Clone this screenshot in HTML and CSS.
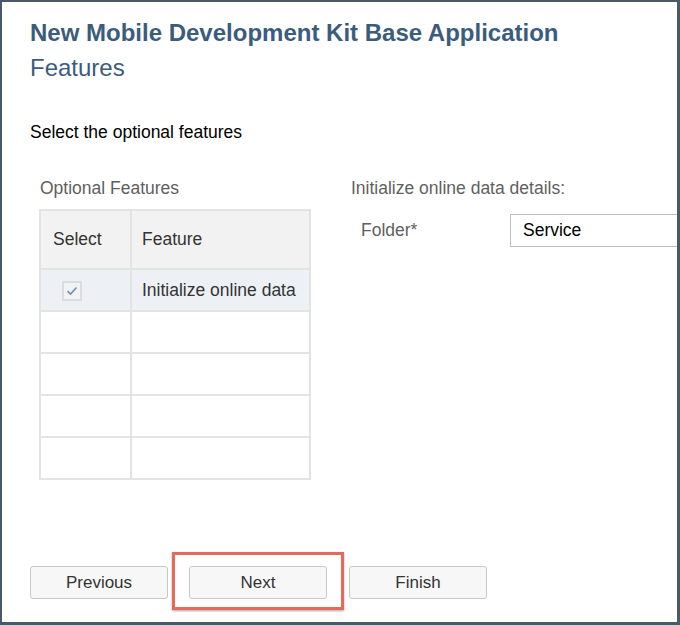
FILE: index.html
```html
<!DOCTYPE html>
<html>
<head>
<meta charset="utf-8">
<link rel="stylesheet" href="styles.css">
</head>
<body>
<div class="frame">
  <header class="head">
    <h1 class="title">New Mobile Development Kit Base Application</h1>
    <h2 class="subtitle">Features</h2>
  </header>
  <p class="intro">Select the optional features</p>
  <div class="content">
    <section class="left">
      <div class="label">Optional Features</div>
      <table class="grid">
        <thead>
          <tr><th class="c-sel">Select</th><th class="c-feat">Feature</th></tr>
        </thead>
        <tbody>
          <tr class="selected">
            <td class="c-sel"><span class="check"><svg width="12" height="10" viewBox="0 0 12 10"><path d="M1.5 5.2 L4.5 8 L10.5 1.5" fill="none" stroke="#6f8fb3" stroke-width="1.6"/></svg></span></td>
            <td>Initialize online data</td>
          </tr>
          <tr><td></td><td></td></tr>
          <tr><td></td><td></td></tr>
          <tr><td></td><td></td></tr>
          <tr><td></td><td></td></tr>
        </tbody>
      </table>
    </section>
    <section class="right">
      <div class="label">Initialize online data details:</div>
      <div class="field">
        <span class="field-label">Folder*</span>
        <div class="input">Service</div>
      </div>
    </section>
  </div>
  <div class="buttons">
    <button class="btn">Previous</button>
    <div class="highlight"><button class="btn">Next</button></div>
    <button class="btn">Finish</button>
  </div>
</div>
</body>
</html>
```
FILE: styles.css
```css
* { box-sizing: border-box; }
html, body { margin: 0; padding: 0; }
body {
  font-family: "Liberation Sans", Arial, sans-serif;
  background: #fff;
}
.frame {
  width: 680px;
  height: 625px;
  border-style: solid;
  border-color: #4a5a68;
  border-width: 2px 3px 3px 2px;
  padding: 0 0 12px 28px;
  overflow: hidden;
  display: flex;
  flex-direction: column;
}
.head { padding-top: 17px; }
.title {
  margin: 0;
  font-size: 24px;
  font-weight: bold;
  color: #3b5c7c;
  line-height: 28px;
  letter-spacing: 0;
}
.subtitle {
  margin: 7px 0 0;
  font-size: 24px;
  font-weight: normal;
  color: #3b5c7c;
  line-height: 28px;
}
.intro {
  margin: 40px 0 0;
  font-size: 17.5px;
  line-height: 21px;
  color: #000;
}
.content {
  display: flex;
  margin-top: 35px;
  padding-left: 9px;
}
.left { width: 272px; }
.right { margin-left: 39px; flex: 1; }
.label {
  font-size: 17.5px;
  line-height: 21px;
  color: #5f5f5f;
  padding-left: 1px;
}
.grid {
  margin-top: 10px;
  border-collapse: collapse;
  width: 272px;
  font-size: 17.5px;
  color: #333;
}
.grid th, .grid td {
  border: 2px solid #e3e3e3;
  height: 42px;
  padding: 0 10px;
  text-align: left;
  font-weight: normal;
}
.grid th {
  background: #f2f2f2;
  height: 59px;
  color: #333;
}
.c-sel { width: 91px; padding-left: 12px !important; }
.selected td { background: #edf1f5; }
.selected td.c-sel { padding-left: 21px !important; }
.check {
  display: inline-flex;
  align-items: center;
  justify-content: center;
  width: 20px;
  height: 20px;
  border: 2px solid #dcdcdc;
  background: #f1f3f5;
  vertical-align: middle;
}
.field {
  display: flex;
  align-items: center;
  margin-top: 15px;
  padding-left: 1px;
}
.field-label {
  width: 159px;
  padding-left: 10px;
  font-size: 17.5px;
  color: #5f5f5f;
}
.input {
  width: 200px;
  height: 33px;
  border: 1px solid #bfbfbf;
  padding: 0 12px;
  font-size: 17.5px;
  line-height: 31px;
  color: #000;
  flex-shrink: 0;
}
.buttons {
  margin-top: auto;
  display: flex;
  align-items: flex-start;
}
.btn {
  width: 138px;
  height: 33px;
  margin-top: 14px;
  border: 1px solid #c7c7c7;
  border-radius: 3px;
  background: #f7f7f7;
  font-family: inherit;
  font-size: 17px;
  color: #333;
  padding: 0;
}
.highlight {
  margin: 0 5px 0 4px;
  padding: 11px 14px 8px 14px;
  border: 3px solid #e66a5a;
  box-shadow: 0 1px 2px rgba(0,0,0,0.35);
}
.highlight .btn { margin-top: 0; }
```
